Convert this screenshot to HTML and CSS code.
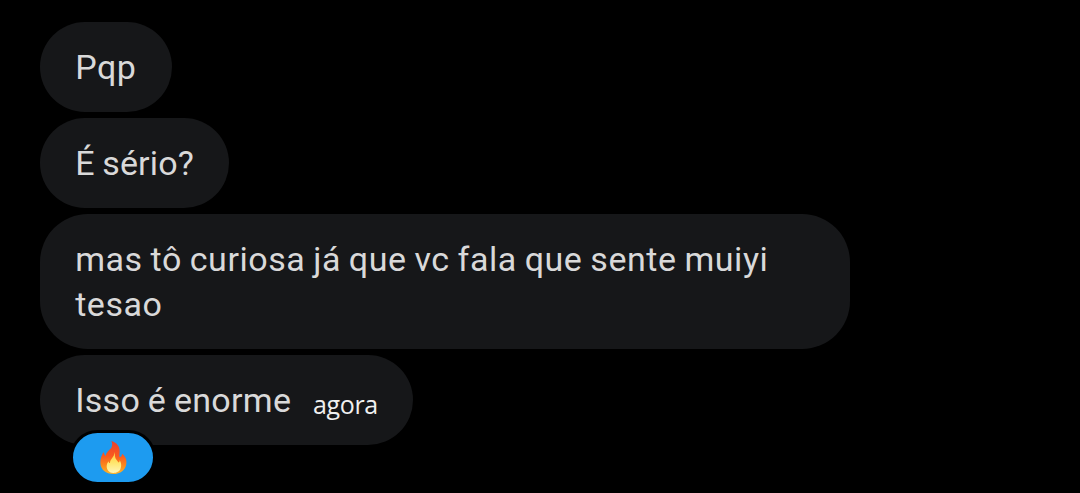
FILE: index.html
```html
<!DOCTYPE html>
<html lang="pt-BR">

<head>
    <meta charset="UTF-8">
    <meta name="viewport" content="width=device-width, initial-scale=1.0">
    <title>Mensagens</title>
    <link rel="stylesheet" href="styles.css">
</head>

<body>
    <main class="chat">
        <div class="bubble">
            <span class="text">Pqp</span>
        </div>
        <div class="bubble bubble-question">
            <span class="text">É sério?</span>
        </div>
        <div class="bubble">
            <span class="text">mas tô curiosa já que vc fala que sente muiyi tesao</span>
        </div>
        <div class="bubble bubble-last">
            <span class="text">Isso é enorme</span>
            <span class="time">agora</span>
            <div class="reaction">
                <svg class="flame" viewBox="0 0 81 99" aria-label="Fogo">
                    <defs>
                        <linearGradient id="outer" x1="0" y1="0" x2="0" y2="1">
                            <stop offset="0" stop-color="#e8402f"/>
                            <stop offset="0.45" stop-color="#f9591f"/>
                            <stop offset="0.75" stop-color="#fb8a1c"/>
                            <stop offset="1" stop-color="#fbb52c"/>
                        </linearGradient>
                        <linearGradient id="inner" x1="0" y1="0" x2="0" y2="1">
                            <stop offset="0" stop-color="#ffc83a"/>
                            <stop offset="0.5" stop-color="#ffe56b"/>
                            <stop offset="1" stop-color="#fff6b8"/>
                        </linearGradient>
                    </defs>
                    <path fill="url(#outer)" d="M34 0C52 5 59 18 59 31C59 38 57 44 59 48C63 49 66 44 66 38C76 46 81 55 79 68C77 87 61 99 40 99C18 99 2 86 1 66C0 52 6 43 10 33C13 38 13 43 17 45C18 33 28 28 34 20C38 13 37 6 34 0Z"/>
                    <path fill="url(#inner)" d="M44 33C46 44 43 48 50 57C55 62 55 67 58 63C59 61 59 59 58 57C64 64 65 73 62 82C59 92 50 96 40 96C28 96 20 87 20 76C20 69 23 64 26 61C26 65 28 67 30 66C30 54 43 49 44 33Z"/>
                </svg>
            </div>
        </div>
    </main>
</body>

</html>
```

FILE: styles.css
```css
body {
    margin: 0;
    background-color: #000;
    color: #d9d9d9;
    font-family: Roboto, sans-serif;
    font-size: 34px;
    line-height: 45px;
}

.chat {
    display: flex;
    flex-direction: column;
    align-items: flex-start;
    box-sizing: border-box;
    gap: 6px;
    min-height: 493px;
    padding: 22px 40px 0;
}

.bubble {
    box-sizing: border-box;
    max-width: 810px;
    padding: 22.5px 35.5px 22.5px 35.2px;
    border-radius: 48px;
    background-color: #161719;
}

.text {
    letter-spacing: 0.55px;
    word-spacing: -1.1px;
}

.bubble-question {
    padding-right: 35px;
}

.bubble-question .text {
    letter-spacing: 0.15px;
    word-spacing: -1px;
}

.bubble-last {
    display: flex;
    position: relative;
    gap: 21.8px;
    height: 90px;
    padding-right: 35px;
}

.bubble-last .text {
    letter-spacing: 0.3px;
    word-spacing: -1px;
}

.time {
    padding-top: 4px;
    color: #f0f0f0;
    font-family: "Open Sans", sans-serif;
    font-size: 25px;
    font-weight: 500;
    letter-spacing: -0.4px;
}

/* Reaction pill hangs over the bottom edge of the bubble */
.reaction {
    display: flex;
    position: absolute;
    top: 75px;
    left: 30px;
    align-items: center;
    justify-content: center;
    width: 80px;
    height: 49px;
    border: 3px solid #000;
    border-radius: 28px;
    background-color: #1d9bf0;
}

.flame {
    width: 27px;
    height: 33px;
}
```
